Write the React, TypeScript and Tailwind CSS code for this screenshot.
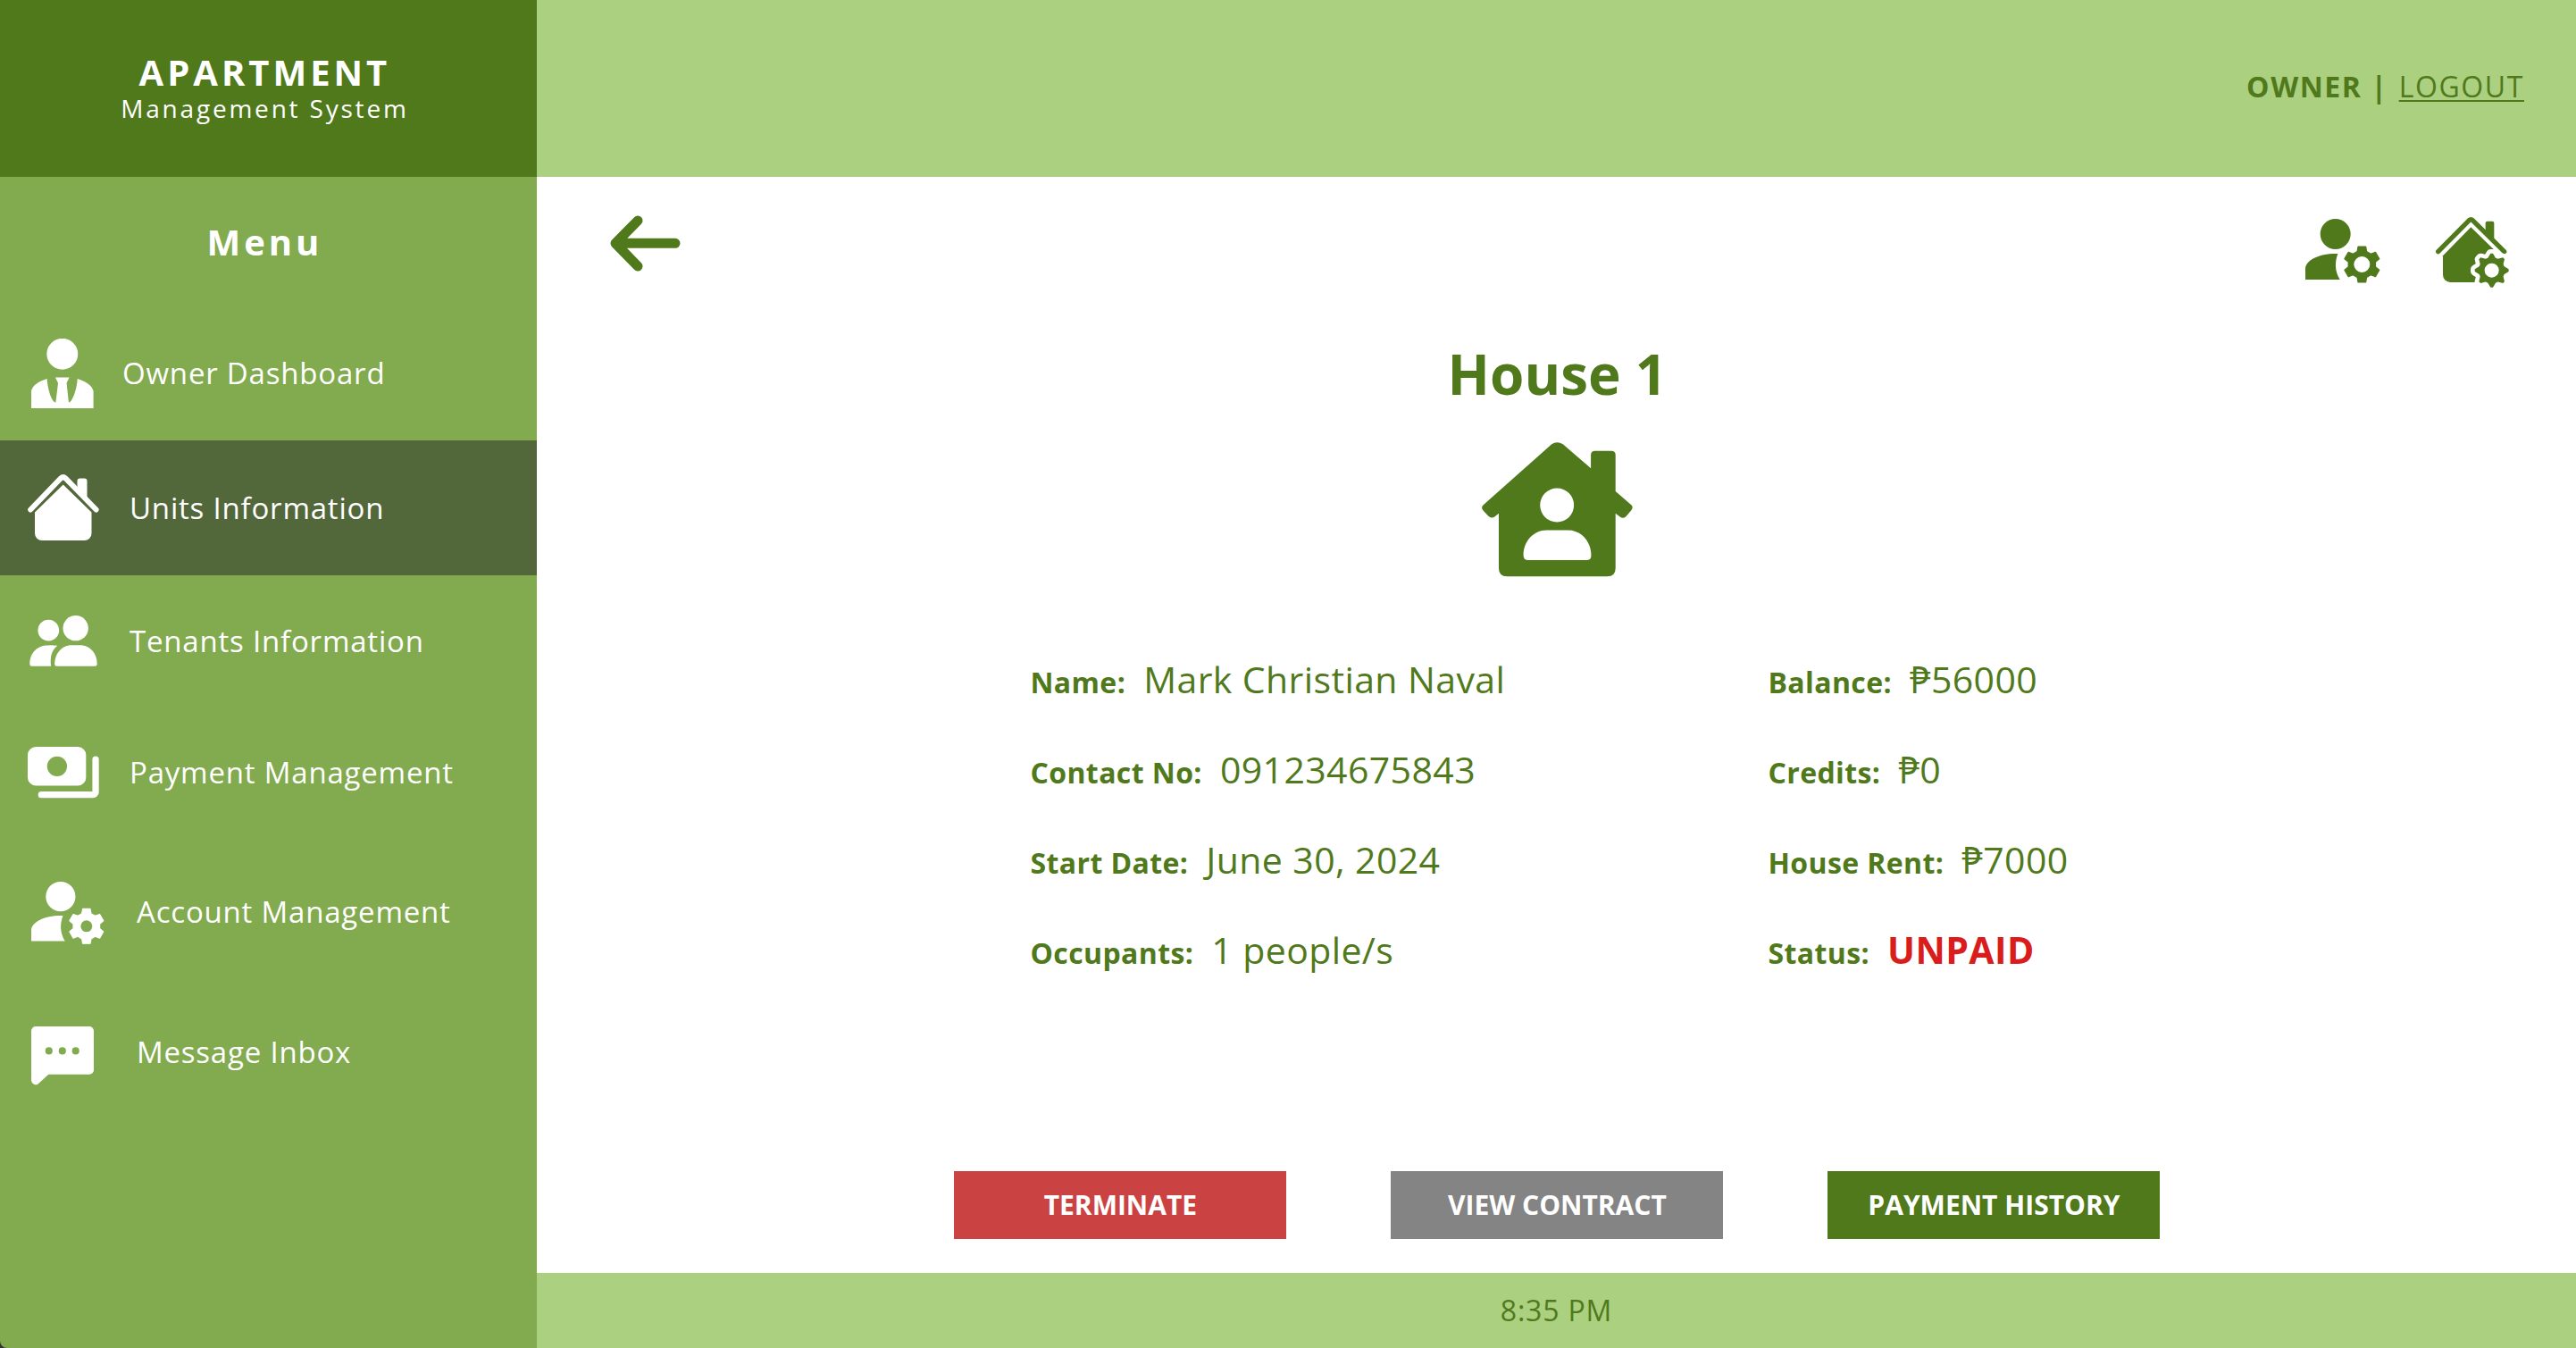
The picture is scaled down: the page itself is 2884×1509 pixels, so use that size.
import type { ReactNode } from "react";

type IconProps = { className?: string };

/** Builds the outline of a cog with flat teeth. */
function cogPoints(cx: number, cy: number, outer: number, inner: number, teeth: number, tip: number, base: number) {
  const points: string[] = [];
  for (let i = 0; i < teeth; i++) {
    const a = -90 + (360 / teeth) * i;
    const corners: [number, number][] = [
      [a - base, inner],
      [a - tip, outer],
      [a + tip, outer],
      [a + base, inner],
    ];
    for (const [deg, r] of corners) {
      const rad = (deg * Math.PI) / 180;
      points.push(`${(cx + r * Math.cos(rad)).toFixed(1)},${(cy + r * Math.sin(rad)).toFixed(1)}`);
    }
  }
  return "M" + points.join("L") + "Z";
}

const ring = (cx: number, cy: number, r: number) =>
  `M${cx - r},${cy}a${r},${r} 0 1 0 ${2 * r},0a${r},${r} 0 1 0 ${-2 * r},0Z`;

function OwnerIcon({ className }: IconProps) {
  return (
    <svg viewBox="0 0 69 77" fill="currentColor" className={className} aria-hidden="true">
      <circle cx="34.3" cy="17" r="17.2" />
      <path d="M0 77V58C1 52 8 47 17.4 44.3C18 54 21 66 25.7 70.3H27L29.6 49L26.5 43H42L39 49L41.3 70.3H42.5C47 66 50.4 54 51 44.3C60 47 67.6 52 68.6 58V77Z" />
    </svg>
  );
}

function UnitsIcon({ className }: IconProps) {
  return (
    <svg viewBox="0 0 80 75" fill="currentColor" className={className} aria-hidden="true">
      <path d="M55.5 19V7.500a3 3 0 0 1 3-3H63.500a3 3 0 0 1 3 3V29Z" />
      <path d="M3.200 39.500L37 4.500Q39.700 2 42.400 4.500L76.600 39.500" fill="none" stroke="currentColor" strokeWidth="6" strokeLinecap="round" />
      <path d="M39.700 11.500L71.500 42.500V66a8 8 0 0 1-8 8H16a8 8 0 0 1-8-8V42.500Z" />
    </svg>
  );
}

function TenantsIcon({ className }: IconProps) {
  return (
    <svg viewBox="0 0 75 56" fill="currentColor" className={className} aria-hidden="true">
      <circle cx="21" cy="16.500" r="11.700" />
      <circle cx="51" cy="14" r="14" />
      <path d="M31 33.200C24.500 38 22.500 46 23.800 56H2.500Q.300 56 .300 53.500C.300 41 9 33 20 33Q26 32.800 31 33.200Z" />
      <path d="M30 56Q27.800 56 27.800 53.500C27.800 41 37 32.700 46 32.700H56C66 32.700 74.700 41 74.700 53.500Q74.700 56 72.500 56Z" />
    </svg>
  );
}

function PaymentIcon({ className }: IconProps) {
  return (
    <svg viewBox="0 0 79 57" fill="currentColor" className={className} aria-hidden="true">
      <path fillRule="evenodd" d={"M9 0H55.500a9 9 0 0 1 9 9V34a9 9 0 0 1-9 9H9a9 9 0 0 1-9-9V9a9 9 0 0 1 9-9Z" + ring(32.5, 21.5, 11)} />
      <path d="M71.500 14a3.600 3.600 0 0 1 7.200 0V50a6.500 6.500 0 0 1-6.500 6.500H15a3.500 3.500 0 0 1 0-7H71.500Z" />
    </svg>
  );
}

function AccountCogIcon({ className, hole = 27 }: IconProps & { hole?: number }) {
  return (
    <svg viewBox="421 618 252 217" fill="currentColor" className={className} aria-hidden="true">
      <circle cx="522" cy="669" r="51" />
      <path d="M421 822V786C421 757 468 733 530 735C519 765 520 795 537 822Z" />
      <path
        fillRule="evenodd"
        stroke="currentColor"
        strokeWidth="4"
        strokeLinejoin="round"
        d={cogPoints(611, 771, 61, 46, 6, 12, 20) + ring(611, 771, hole + 2)}
      />
    </svg>
  );
}

function MessageIcon({ className }: IconProps) {
  return (
    <svg viewBox="0 0 69 65" fill="currentColor" className={className} aria-hidden="true">
      <path
        fillRule="evenodd"
        d={
          "M5 0H64a5 5 0 0 1 5 5V48a5 5 0 0 1-5 5H19L7.500 63.500C4.500 66 0 63 0 59V5a5 5 0 0 1 5-5Z" +
          ring(19.5, 27, 4) + ring(34.3, 27, 4) + ring(49, 27, 4)
        }
      />
    </svg>
  );
}

function HouseCogIcon({ className }: IconProps) {
  const cog = cogPoints(1048, 791, 57, 44, 8, 4, 17);
  return (
    <svg viewBox="860 612 246 238" fill="currentColor" className={className} aria-hidden="true">
      <path d="M1027 668V632Q1027 626 1033 626H1050Q1056 626 1056 632V696Z" />
      <path d="M868 728L972 623Q978 618 984 623L1090 728" fill="none" stroke="currentColor" strokeWidth="16" strokeLinecap="round" />
      <path d="M978 646L1054 720L1048 791L990 831H909a25 25 0 0 1-25-25V742Z" />
      <path d={cog} fill="white" stroke="white" strokeWidth="28" strokeLinejoin="round" />
      <path fillRule="evenodd" d={cog + ring(1048, 791, 24)} />
    </svg>
  );
}

function HouseOwnerIcon({ className }: IconProps) {
  return (
    <svg viewBox="297 403 508 453" fill="currentColor" className={className} aria-hidden="true">
      <path
        fillRule="evenodd"
        d={
          "M532 410Q550 397 570 410L664 491V446Q664 432 678 432H733Q747 432 747 446V568L800 614Q808 622 800 632L782 653Q772 661 763 655L747 643V827Q747 855 719 855H382Q354 855 354 827V643L339 655Q329 661 319 652L301 632Q293 622 302 614Z" +
          ring(550, 615, 57) +
          "M515 699H587C632 699 665 738 665 783Q665 800 649 800H453Q437 800 437 783C437 738 470 699 515 699Z"
        }
      />
    </svg>
  );
}

function BackIcon({ className }: IconProps) {
  return (
    <svg viewBox="128 123 237 189" fill="none" stroke="currentColor" strokeWidth="33" strokeLinecap="round" strokeLinejoin="round" className={className} aria-hidden="true">
      <path d="M347 217H148M221 141L146 217L221 294" />
    </svg>
  );
}

type MenuItem = { label: string; icon: ReactNode; row: string; active?: boolean };

const menu: MenuItem[] = [
  { label: "Owner Dashboard", icon: <OwnerIcon className="ml-1 w-[70px]" />, row: "h-[150px] gap-8" },
  { label: "Units Information", icon: <UnitsIcon className="w-20" />, row: "h-[151px] gap-[34px]", active: true },
  { label: "Tenants Information", icon: <TenantsIcon className="mx-0.5 w-[76px]" />, row: "h-[147px] gap-[34px]" },
  { label: "Payment Management", icon: <PaymentIcon className="w-20" />, row: "h-[148px] gap-[34px]" },
  { label: "Account Management", icon: <AccountCogIcon hole={20} className="mt-0.5 ml-1 w-[82px]" />, row: "h-[164px] gap-9" },
  { label: "Message Inbox", icon: <MessageIcon className="mt-2 mr-3 ml-1 w-[70px]" />, row: "h-[150px] gap-9" },
];

const details: { label: string; value: string; alert?: boolean }[][] = [
  [
    { label: "Name:", value: "Mark Christian Naval" },
    { label: "Contact No:", value: "091234675843" },
    { label: "Start Date:", value: "June 30, 2024" },
    { label: "Occupants:", value: "1 people/s" },
  ],
  [
    { label: "Balance:", value: "₱56000" },
    { label: "Credits:", value: "₱0" },
    { label: "House Rent:", value: "₱7000" },
    { label: "Status:", value: "UNPAID", alert: true },
  ],
];

const actions = [
  { label: "TERMINATE", color: "bg-[#cb4242]" },
  { label: "VIEW CONTRACT", color: "bg-[#848484]" },
  { label: "PAYMENT HISTORY", color: "bg-[#50791c]" },
];

function Sidebar() {
  return (
    <aside className="flex flex-col rounded-bl-lg bg-[#82aa4e] text-white">
      <div className="flex h-[198px] flex-col items-center justify-center bg-[#50791c] pt-1 pr-2 text-center">
        <p className="text-[40px] leading-10 font-bold tracking-widest">APARTMENT</p>
        <p className="text-[28px] leading-10 tracking-widest">Management System</p>
      </div>
      <h2 className="py-12 pr-2 text-center text-[40px] leading-[49px] font-bold tracking-widest">Menu</h2>
      <nav className="tracking-wider">
        {menu.map((item) => (
          <a
            key={item.label}
            href="#"
            aria-current={item.active ? "page" : undefined}
            className={`flex items-center pl-[31px] text-[33px] leading-10 whitespace-nowrap ${item.row} ${item.active ? "bg-[#53683a]" : ""}`}
          >
            {item.icon}
            {item.label}
          </a>
        ))}
      </nav>
    </aside>
  );
}

export default function App() {
  return (
    <div className="grid min-h-screen grid-cols-[5fr_19fr] bg-[#333] font-['Open_Sans','Noto_Sans',sans-serif]">
      <Sidebar />
      <div className="flex flex-col bg-white text-[#50791c]">
        <header className="flex h-[198px] items-center justify-end gap-3 bg-[#abd07f] pr-[58px] pb-1 text-[32px] leading-10 tracking-wider">
          <strong className="font-bold">OWNER |</strong>
          <a href="#" className="underline decoration-2 underline-offset-3">LOGOUT</a>
        </header>

        <main className="flex flex-1 flex-col pl-0.5">
          <div className="flex items-start justify-between pt-[43px] pr-[75px] pl-20">
            <button type="button" aria-label="Back">
              <BackIcon className="w-[79px]" />
            </button>
            <div className="flex items-start gap-[62px]">
              <button type="button" aria-label="Tenant settings" className="pt-1">
                <AccountCogIcon className="w-[84px]" />
              </button>
              <button type="button" aria-label="House settings" className="pt-0.5">
                <HouseCogIcon className="w-[82px]" />
              </button>
            </div>
          </div>

          <h1 className="mt-14 text-center text-[62px] leading-20 font-bold">House 1</h1>
          <HouseOwnerIcon className="mx-auto mt-[37px] w-[169px]" />

          <div className="mx-auto mt-16 grid w-[1180px] max-w-full grid-cols-[7fr_3fr] tracking-wide">
            {details.map((column, i) => (
              <dl key={i}>
                {column.map((row) => (
                  <div key={row.label} className="flex h-[101px] items-baseline gap-5 pt-[22px] whitespace-nowrap">
                    <dt className="text-[32px] leading-[56px] font-bold">{row.label}</dt>
                    <dd className={`text-[41px] leading-[56px] ${row.alert ? "font-bold text-[#d91c1c]" : ""}`}>{row.value}</dd>
                  </div>
                ))}
              </dl>
            ))}
          </div>

          <div className="mt-auto mb-[38px] flex justify-center gap-[117px]">
            {actions.map((action) => (
              <button
                key={action.label}
                type="button"
                className={`h-19 w-[372px] text-[30px] leading-10 font-bold whitespace-nowrap text-white ${action.color}`}
              >
                {action.label}
              </button>
            ))}
          </div>
        </main>

        <footer className="flex h-[84px] items-center justify-center bg-[#abd07f] text-[32px] leading-10 tracking-wide">
          <time dateTime="20:35">8:35 PM</time>
        </footer>
      </div>
    </div>
  );
}
